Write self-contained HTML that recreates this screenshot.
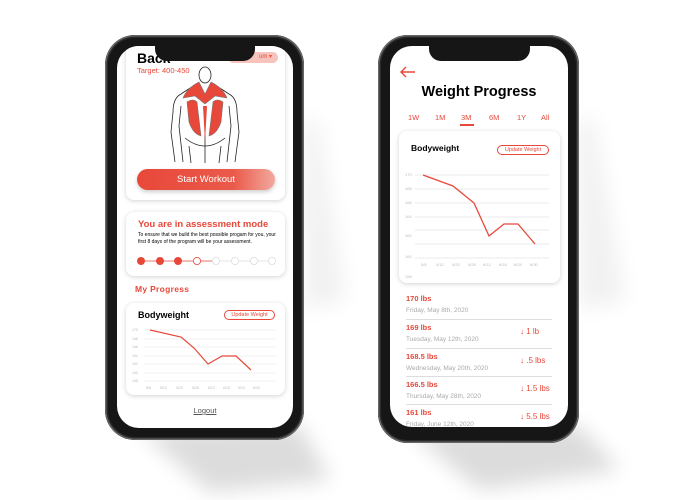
<!DOCTYPE html>
<html><head><style>
*{margin:0;padding:0;box-sizing:border-box}
body{width:700px;height:500px;background:#fff;position:relative;overflow:hidden;font-family:"Liberation Sans",sans-serif}
.abs{position:absolute}
.phone{position:absolute;background:#161616;border-radius:30px;box-shadow:0 0 0 1.5px #666 inset,0 0 0 3px #2a2a2a inset}
.screen{position:absolute;background:#fff;border-radius:22px;overflow:hidden}
.notch{position:absolute;background:#161616;border-radius:0 0 12px 12px}
.card{position:absolute;background:#fff;border-radius:8px;box-shadow:0 1px 5px rgba(0,0,0,.18)}
.red{color:#e8483a}
.pill{position:absolute;border:1px solid #e8483a;border-radius:8px;color:#e8483a;font-size:5.5px;text-align:center}
</style></head><body>
<svg class="abs" style="left:0;top:0" width="700" height="500">
<defs><filter id="b" x="-50%" y="-50%" width="200%" height="200%"><feGaussianBlur stdDeviation="10"/></filter></defs>
<polygon points="140,430 300,425 330,480 210,492" fill="#dcdcdc" filter="url(#b)"/>
<polygon points="410,432 578,425 620,470 480,490" fill="#dcdcdc" filter="url(#b)"/>
<polygon points="302,120 318,120 345,300 305,310" fill="#f1f1f1" filter="url(#b)"/>
<polygon points="576,120 594,120 625,300 580,310" fill="#f1f1f1" filter="url(#b)"/>
</svg>

<!-- LEFT PHONE -->
<div class="phone" style="left:105px;top:35px;width:199px;height:405px"></div>
<div class="screen" style="left:117px;top:46px;width:176px;height:382px">
  <div class="card" style="left:9px;top:-10px;width:159px;height:164px"></div>
  <div class="abs" style="left:20px;top:4px;font-size:14px;font-weight:bold">Back</div>
  <div class="abs red" style="left:20px;top:20px;font-size:7.5px">Target: 400-450</div>
  <div class="abs" style="left:111px;top:6px;width:50px;height:11px;background:#f6c3bd;border-radius:6px;color:#e8483a;font-size:6px;text-align:right;padding-right:6px;line-height:11px">um ▾</div>
  <svg class="abs" style="left:48px;top:20px" width="80" height="100" viewBox="0 0 80 100">
    <g fill="none" stroke="#222" stroke-width="0.8">
      <ellipse cx="40" cy="9" rx="6" ry="8"/>
      <path d="M33 17 Q22 24 16 28 Q8 32 8 46 L6 66 L10 96 M47 17 Q58 24 64 28 Q72 32 72 46 L74 66 L70 96"/>
      <path d="M16 40 L14 60 L18 96 M64 40 L66 60 L62 96 M20 72 Q40 88 60 72 M24 80 L26 97 M56 80 L54 97 M40 60 L40 97"/>
    </g>
    <path d="M34 16 L40 28 L46 16 Q58 22 62 32 L50 30 L40 38 L30 30 L18 32 Q22 22 34 16Z" fill="#e8483a" stroke="#777" stroke-width="0.6"/>
    <path d="M22 36 Q28 32 32 36 L36 70 Q28 68 24 56Z M58 36 Q52 32 48 36 L44 70 Q52 68 56 56Z" fill="#e8483a" stroke="#777" stroke-width="0.6"/>
    <path d="M38 40 L40 76 L42 40 Z" fill="#e8483a"/>
  </svg>
  <div class="abs" style="left:20px;top:123px;width:138px;height:21px;border-radius:11px;background:linear-gradient(90deg,#e8483a,#ea5a4a 70%,#f2a99f);color:#fff;font-size:9.5px;text-align:center;line-height:21px;box-shadow:0 2px 4px rgba(0,0,0,.2)">Start Workout</div>

  <div class="card" style="left:9px;top:166px;width:159px;height:64px"></div>
  <div class="abs red" style="left:21px;top:173px;font-size:9.5px;font-weight:bold">You are in assessment mode</div>
  <div class="abs" style="left:21px;top:186px;font-size:5px;line-height:7px;width:140px">To ensure that we build the best possible progam for you, your first 8 days of the program will be your assessment.</div>
  <svg class="abs" style="left:18px;top:209px" width="145" height="12">
    <line x1="6" y1="6" x2="80" y2="6" stroke="#e8483a" stroke-width="0.8"/>
    <line x1="80" y1="6" x2="138" y2="6" stroke="#ddd" stroke-width="0.8"/>
    <g fill="#e8483a"><circle cx="6" cy="6" r="4"/><circle cx="25" cy="6" r="4"/><circle cx="43" cy="6" r="4"/></g>
    <circle cx="62" cy="6" r="3.6" fill="#fff" stroke="#e8483a" stroke-width="0.8"/>
    <g fill="#fff" stroke="#ddd" stroke-width="0.8"><circle cx="81" cy="6" r="3.6"/><circle cx="100" cy="6" r="3.6"/><circle cx="119" cy="6" r="3.6"/><circle cx="137" cy="6" r="3.6"/></g>
  </svg>
  <div class="abs red" style="left:18px;top:238px;font-size:8.5px;font-weight:bold;letter-spacing:.3px">My Progress</div>

  <div class="card" style="left:9px;top:257px;width:159px;height:92px"></div>
  <div class="abs" style="left:21px;top:264px;font-size:9px;font-weight:bold">Bodyweight</div>
  <div class="pill" style="left:107px;top:264px;width:51px;height:10px;line-height:8px">Update Weight</div>
  <svg class="abs" style="left:9px;top:276px" width="159" height="70">
    <g stroke="#eee" stroke-width="0.7"><line x1="18" y1="8" x2="150" y2="8"/><line x1="18" y1="17" x2="150" y2="17"/><line x1="18" y1="25" x2="150" y2="25"/><line x1="18" y1="34" x2="150" y2="34"/><line x1="18" y1="42" x2="150" y2="42"/><line x1="18" y1="51" x2="150" y2="51"/><line x1="18" y1="59" x2="150" y2="59"/></g>
    <g fill="#bbb" font-size="3.5" font-family="Liberation Sans"><text x="6" y="9">170</text><text x="6" y="18">168</text><text x="6" y="26">166</text><text x="6" y="35">164</text><text x="6" y="43">162</text><text x="6" y="52">160</text><text x="6" y="60">158</text>
    <text x="20" y="67">5/8</text><text x="34" y="67">5/12</text><text x="50" y="67">5/20</text><text x="66" y="67">5/28</text><text x="82" y="67">6/12</text><text x="97" y="67">6/18</text><text x="112" y="67">6/24</text><text x="127" y="67">6/30</text></g>
    <polyline points="24,8 55,15 68,26 82,42 96,34 110,34 125,48" fill="none" stroke="#e8483a" stroke-width="1.2"/>
  </svg>
  <div class="abs" style="left:0;width:176px;top:360px;text-align:center;font-size:7.5px;color:#555;text-decoration:underline">Logout</div>
</div>
<div class="notch" style="left:155px;top:40px;width:100px;height:21px"></div>

<!-- RIGHT PHONE -->
<div class="phone" style="left:378px;top:35px;width:201px;height:408px"></div>
<div class="screen" style="left:390px;top:46px;width:178px;height:381px">
  <svg class="abs" style="left:9px;top:20px" width="18" height="12"><path d="M16 6 H2 M7 1 L2 6 L7 11" stroke="#e8483a" stroke-width="1.4" fill="none"/></svg>
  <div class="abs" style="left:0;width:178px;top:38px;text-align:center;font-size:14.5px;font-weight:bold">Weight Progress</div>
  <div class="abs red" style="left:18px;top:67px;font-size:7.5px">1W</div>
  <div class="abs red" style="left:45px;top:67px;font-size:7.5px">1M</div>
  <div class="abs red" style="left:71px;top:67px;font-size:7.5px">3M</div>
  <div class="abs" style="left:70px;top:78px;width:14px;height:1.5px;background:#e8483a"></div>
  <div class="abs red" style="left:99px;top:67px;font-size:7.5px">6M</div>
  <div class="abs red" style="left:127px;top:67px;font-size:7.5px">1Y</div>
  <div class="abs red" style="left:151px;top:67px;font-size:7.5px">All</div>
  <div class="card" style="left:9px;top:85px;width:161px;height:152px"></div>
  <div class="abs" style="left:21px;top:97px;font-size:8.5px;font-weight:bold">Bodyweight</div>
  <div class="pill" style="left:107px;top:99px;width:52px;height:10px;line-height:8px">Update Weight</div>
  <svg class="abs" style="left:9px;top:120px" width="161" height="115">
    <g stroke="#e4e4e4" stroke-width="0.7"><line x1="16" y1="9" x2="150" y2="9"/><line x1="16" y1="23" x2="150" y2="23"/><line x1="16" y1="37" x2="150" y2="37"/><line x1="16" y1="51" x2="150" y2="51"/><line x1="16" y1="64" x2="150" y2="64"/><line x1="16" y1="78" x2="150" y2="78"/><line x1="16" y1="92" x2="150" y2="92"/></g>
    <g fill="#bbb" font-size="4" font-family="Liberation Sans"><text x="6" y="10">170</text><text x="6" y="24">168</text><text x="6" y="38">166</text><text x="6" y="52">164</text><text x="6" y="71">162</text><text x="6" y="92">160</text><text x="6" y="112">158</text>
    <text x="22" y="100">5/8</text><text x="37" y="100">5/12</text><text x="53" y="100">5/20</text><text x="69" y="100">5/28</text><text x="84" y="100">6/12</text><text x="100" y="100">6/18</text><text x="115" y="100">6/24</text><text x="131" y="100">6/30</text></g>
    <polyline points="24,9 54,20 75,37 90,70 105,58 119,58 136,78" fill="none" stroke="#e8483a" stroke-width="1.3"/>
  </svg>
  <div class="abs" style="left:16px;top:247px;font-size:7.5px;line-height:11px"><b class="red">170 lbs</b><br><span style="color:#aaa;font-size:6.5px">Friday, May 8th, 2020</span></div>
  <div class="abs" style="left:16px;top:273px;width:146px;height:1px;background:#ddd"></div>
  <div class="abs" style="left:16px;top:276px;font-size:7.5px;line-height:11px"><b class="red">169 lbs</b><br><span style="color:#aaa;font-size:6.5px">Tuesday, May 12th, 2020</span></div>
  <div class="abs red" style="left:130px;top:281px;font-size:8px">↓ 1 lb</div>
  <div class="abs" style="left:16px;top:302px;width:146px;height:1px;background:#ddd"></div>
  <div class="abs" style="left:16px;top:305px;font-size:7.5px;line-height:11px"><b class="red">168.5 lbs</b><br><span style="color:#aaa;font-size:6.5px">Wednesday, May 20th, 2020</span></div>
  <div class="abs red" style="left:130px;top:310px;font-size:8px">↓ .5 lbs</div>
  <div class="abs" style="left:16px;top:330px;width:146px;height:1px;background:#ddd"></div>
  <div class="abs" style="left:16px;top:333px;font-size:7.5px;line-height:11px"><b class="red">166.5 lbs</b><br><span style="color:#aaa;font-size:6.5px">Thursday, May 28th, 2020</span></div>
  <div class="abs red" style="left:130px;top:338px;font-size:8px">↓ 1.5 lbs</div>
  <div class="abs" style="left:16px;top:358px;width:146px;height:1px;background:#ddd"></div>
  <div class="abs" style="left:16px;top:361px;font-size:7.5px;line-height:11px"><b class="red">161 lbs</b><br><span style="color:#aaa;font-size:6.5px">Friday, June 12th, 2020</span></div>
  <div class="abs red" style="left:130px;top:366px;font-size:8px">↓ 5.5 lbs</div>
</div>
<div class="notch" style="left:429px;top:40px;width:101px;height:21px"></div>
</body></html>
